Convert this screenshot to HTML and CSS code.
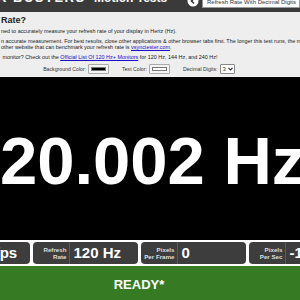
FILE: index.html
```html
<!DOCTYPE html>
<html lang="en">
<head>
  <meta charset="UTF-8" />
  <title>TestUFO: Refresh Rate</title>
  <meta name="viewport" content="width=device-width, initial-scale=1" />
  <link rel="stylesheet" href="styles.css">
</head>
<body>

  <header class="topbar">
    <div class="brand">
      <span class="brand-logo">R BUSTERS</span>
      <span class="brand-sub">Motion Tests</span>
    </div>
    <div class="nav">
      <svg class="nav-icon" width="12" height="12" viewBox="0 0 12 12">
        <circle cx="6" cy="6" r="5.5" fill="#fff" />
        <path d="M7 3.5 L4.5 6 L7 8.5" fill="none" stroke="#333" stroke-width="1.6" />
      </svg>
      <div class="test-select">Refresh Rate With Decimal Digits</div>
    </div>
  </header>

  <section class="intro">
    <h2>Rate?</h2>
    <p>ned to accurately measure your refresh rate of your display in Hertz (Hz).</p>
    <p>n accurate measurement. For best results, close other applications &amp; other browser tabs first. The longer this test runs, the more accurate.<br>
      other website that can benchmark your refresh rate is <a href="#">vsynctester.com</a>.</p>
    <p>&nbsp;monitor? Check out the <a href="#">Official List Of 120 Hz+ Monitors</a> for 120 Hz, 144 Hz, and 240 Hz!</p>
  </section>

  <div class="stage">
    <div class="controls">
      <label class="control">Background Color: <span class="swatch"><span class="swatch-fill swatch-black"></span></span></label>
      <label class="control">Text Color: <span class="swatch"><span class="swatch-fill swatch-white"></span></span></label>
      <label class="control">Decimal Digits:
        <span class="digits">3
          <svg width="5" height="4" viewBox="0 0 5 4"><path d="M0.5 0.8 L2.5 3 L4.5 0.8" fill="none" stroke="#222" stroke-width="1.1" /></svg>
        </span>
      </label>
    </div>

    <div class="display">
      <div class="rate">120.002 Hz</div>
    </div>

    <div class="stats">
      <div class="stat"><div class="stat-label">Frame<br>Rate</div><div class="stat-value">120 fps</div></div>
      <div class="stat"><div class="stat-label">Refresh<br>Rate</div><div class="stat-value">120 Hz</div></div>
      <div class="stat"><div class="stat-label">Pixels<br>Per Frame</div><div class="stat-value">0</div></div>
      <div class="stat"><div class="stat-label">Pixels<br>Per Sec</div><div class="stat-value">-1</div></div>
    </div>

    <div class="status">READY*</div>
  </div>

</body>
</html>
```

FILE: styles.css
```css
body {
  margin: 0;
  overflow: hidden;
  background: #fff;
  font-family: "Liberation Sans", Arial, sans-serif;
  color: #222;
}

/* barra superior */
.topbar {
  display: flex;
  justify-content: space-between;
  align-items: flex-start;
  height: 12px;
  background: #3a3a3a;
  overflow: hidden;
}
.brand {
  margin-top: -11px;
  margin-left: -3px;
  line-height: 16px;
  color: #fff;
  font-weight: bold;
  white-space: nowrap;
}
.brand-logo {
  font-size: 13px;
  letter-spacing: 1.5px;
}
.brand-sub {
  font-size: 12px;
  margin-left: 4px;
}
.nav {
  display: flex;
  align-items: flex-start;
  gap: 3px;
}
.nav-icon {
  margin-top: -5px;
}
.test-select {
  width: 92px;
  height: 7px;
  margin-top: -1px;
  padding-left: 4px;
  background: #fff;
  border: 1px solid #999;
  color: #333;
  font-size: 6px;
  line-height: 4px;
  white-space: nowrap;
  overflow: hidden;
}

/* texto de introduccion */
.intro {
  background: #eee;
  padding: 3px 0 1.5px 1px;
  white-space: nowrap;
  overflow: hidden;
}
.intro h2 {
  margin: 0;
  font-size: 9px;
  line-height: 10px;
}
.intro p {
  margin: 3px 0 0;
  font-size: 5.45px;
  line-height: 6.5px;
}
.intro a {
  color: #1a0dcc;
}

/* zona centrada, mas ancha que la ventana */
.stage {
  width: 420px;
  margin-left: -71px;
}
.controls {
  display: flex;
  justify-content: center;
  align-items: center;
  gap: 13px;
  height: 15px;
  background: #eee;
  font-size: 5.2px;
  color: #333;
}
.control {
  display: flex;
  align-items: center;
  gap: 2px;
}
.swatch {
  display: block;
  width: 21px;
  height: 10px;
  box-sizing: border-box;
  padding: 2px;
  background: #f4f4f4;
  border: 1px solid #aaa;
  border-radius: 1px;
}
.swatch-fill {
  display: block;
  height: 100%;
  border: 0.5px solid #777;
  box-sizing: border-box;
}
.swatch-black {
  background: #000;
}
.swatch-white {
  background: #fff;
}
.digits {
  display: flex;
  align-items: center;
  gap: 2px;
  height: 8px;
  padding: 0 1px 0 2px;
  background: #fff;
  border: 1px solid #888;
  border-radius: 1px;
  font-size: 6px;
}

/* pantalla principal */
.display {
  display: flex;
  justify-content: center;
  align-items: center;
  height: 163px;
  padding: 4px 10px 0 0;
  box-sizing: border-box;
  background: #000;
}
.rate {
  color: #fff;
  font-size: 67px;
  font-weight: bold;
  line-height: 1;
  white-space: nowrap;
}

/* estadisticas */
.stats {
  display: flex;
  justify-content: center;
  gap: 3px;
  padding: 2px 0;
  background: #fff;
}
.stat {
  display: flex;
  flex: none;
  width: 105px;
  height: 22px;
  background: #3d3d3d;
  border-radius: 4px;
  color: #fff;
}
.stat-label {
  display: flex;
  flex-direction: column;
  justify-content: center;
  width: 37px;
  box-sizing: border-box;
  padding-right: 2px;
  border-right: 1px solid #5a5a5a;
  text-align: right;
  font-size: 6.2px;
  font-weight: bold;
  line-height: 7px;
  color: #ddd;
}
.stat-value {
  padding-left: 4px;
  font-size: 15px;
  font-weight: bold;
  line-height: 22px;
  white-space: nowrap;
}

.status {
  height: 38px;
  background: #367b23;
  color: #fff;
  font-size: 13px;
  font-weight: bold;
  line-height: 38px;
  text-align: center;
}
```
